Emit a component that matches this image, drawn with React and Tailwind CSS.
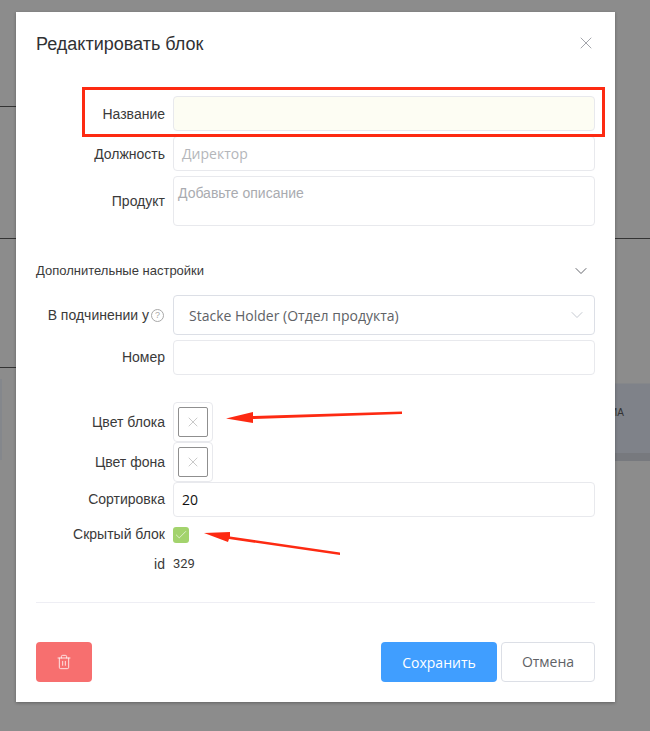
import React from 'react';
import { ChevronDown, X, Check, Trash2 } from 'lucide-react';

const helv = "font-['Liberation_Sans',Arial,sans-serif]";
const open = "font-['Open_Sans',sans-serif]";

const Row = ({ label, h = 'h-[35px]', mb = 'mb-[5px]', labelClass = '', children }) => (
  <div className={`flex items-center ${h} ${mb}`}>
    <div className={`w-[137px] pr-2 text-right text-[14px] text-[#3a3a3a] ${labelClass}`}>{label}</div>
    <div className="flex-1 h-full">{children}</div>
  </div>
);

const Input = ({ className = '', children }) => (
  <div className={`h-full w-full rounded border border-[#e8e9ed] flex items-center ${className}`}>
    {children}
  </div>
);

const ColorPicker = () => (
  <div className="h-10 w-10 rounded border border-[#e8e9ed] flex items-center justify-center">
    <div className="h-[30px] w-[30px] rounded-[2px] border border-[#8f8f8f] flex items-center justify-center">
      <X size={16} strokeWidth={1.1} className="text-[#b5b5b5]" />
    </div>
  </div>
);

const App = () => {
  return (
    <div className={`relative h-[731px] w-[650px] overflow-hidden bg-[#8c8c8c] pt-3 pl-4 ${helv}`}>
      {/* page behind the overlay */}
      <div className="absolute left-0 top-[106px] h-px w-4 bg-[#333]" />
      <div className="absolute left-0 top-[238px] h-px w-full bg-[#333]" />
      <div className="absolute left-0 top-[367px] h-px w-4 bg-[#333]" />
      <div className="absolute left-0 top-[379px] h-[81px] w-[2px] bg-[#84878c]" />
      <div className="absolute left-[560px] top-[383px] h-[78px] w-[90px] border-t border-t-[#85878a] border-b-[8px] border-b-[#77797e] bg-[#7f8289] pl-[50px] pt-[22px] text-[10px] leading-[14px] text-[#333]">
        ИА
      </div>

      <div className="relative h-[690px] w-[599px] bg-white px-5 shadow-[0_1px_3px_rgba(0,0,0,0.3)]">
        <div className="flex h-[84px] items-start justify-between pt-[21px]">
          <h2 className="text-[18px] leading-[22px] text-[#303133]">Редактировать блок</h2>
          <X size={20} strokeWidth={1.1} className="-mr-[1px] text-[#9a9ca3]" />
        </div>

        <Row label="Название" labelClass="pt-px">
          <Input className="bg-[#fdfdf3]" />
        </Row>
        <Row label="Должность" labelClass="pt-px">
          <Input className={`px-2 text-[14px] text-[#b4b6ba] ${open}`}>Директор</Input>
        </Row>
        <Row label="Продукт" h="h-[50px]" mb="mb-[35px]">
          <Input className="items-start px-1 pt-2 text-[14px] leading-[16px] text-[#a9abb0]">Добавьте описание</Input>
        </Row>

        <div className="mb-[14px] flex h-5 items-center justify-between pr-[4px] text-[13px] text-[#3a3a3a]">
          <span>Дополнительные настройки</span>
          <ChevronDown size={20} strokeWidth={1.1} className="text-[#55585f]" />
        </div>

        <Row h="h-10" label={
          <span className="inline-flex items-center justify-end gap-[2px] pr-px">
            В подчинении у
            <span className="flex h-[13px] w-[13px] items-center justify-center rounded-full border border-[#a8a8a8] text-[9px] leading-none text-[#a8a8a8]">?</span>
          </span>
        }>
          <div className={`flex h-full w-full items-center justify-between rounded border border-[#dcdfe6] pl-[15px] pr-[7px] text-[14px] text-[#606266] ${open}`}>
            Stacke Holder (Отдел продукта)
            <ChevronDown size={20} strokeWidth={1.1} className="text-[#c0c4cc]" />
          </div>
        </Row>
        <Row label="Номер" mb="mb-[27px]">
          <Input />
        </Row>

        <Row label="Цвет блока" h="h-10" mb="mb-0">
          <ColorPicker />
        </Row>
        <Row label="Цвет фона" h="h-10" mb="mb-0">
          <ColorPicker />
        </Row>
        <Row label="Сортировка" mb="mb-[10px]">
          <Input className={`px-2 text-[14px] text-[#111] ${open}`}>20</Input>
        </Row>
        <div className="mb-[13px] flex h-4 items-center">
          <div className="w-[137px] pr-2 pb-[2px] text-right text-[14px] text-[#3a3a3a]">Скрытый блок</div>
          <div className="flex h-4 w-4 items-center justify-center rounded-[3px] bg-[#a3d36d]">
            <Check size={14} strokeWidth={1.1} className="text-white" />
          </div>
        </div>
        <div className="mb-[30px] flex h-[16px] items-center">
          <div className="w-[137px] pr-2 text-right text-[14px] text-[#3a3a3a]">id</div>
          <span className="text-[13px] text-[#3a3a3a] font-['Roboto',sans-serif]">329</span>
        </div>

        <div className="mb-[39px] h-px w-full bg-[#eeeef4]" />

        <div className={`flex h-10 items-stretch gap-1 text-[14px] ${open}`}>
          <button className="mr-auto flex w-14 items-center justify-center rounded bg-[#f76f6f]">
            <Trash2 size={16} strokeWidth={1.2} className="text-white" />
          </button>
          <button className="w-[116px] rounded bg-[#409eff] font-medium text-white">Сохранить</button>
          <button className="w-[94px] rounded border border-[#dcdfe6] bg-white pb-px text-[#606266]">Отмена</button>
        </div>
      </div>

      {/* red annotations drawn over the screenshot */}
      <div className="absolute left-[82px] top-[87px] h-[50px] w-[523px] border-[3px] border-[#fd2a12]" />
      <svg className="absolute left-0 top-0" width="650" height="731" fill="none">
        <path d="M402 411.5 L402 414 L253 419 L253 423 L226 418.5 L253 412 L253 416 Z" fill="#fd2a12" />
        <path d="M204 533 L230 532 L230 536.5 L340 552.5 L340 555 L229 539 L228 542 Z" fill="#fd2a12" />
      </svg>
    </div>
  );
};

export default App;
